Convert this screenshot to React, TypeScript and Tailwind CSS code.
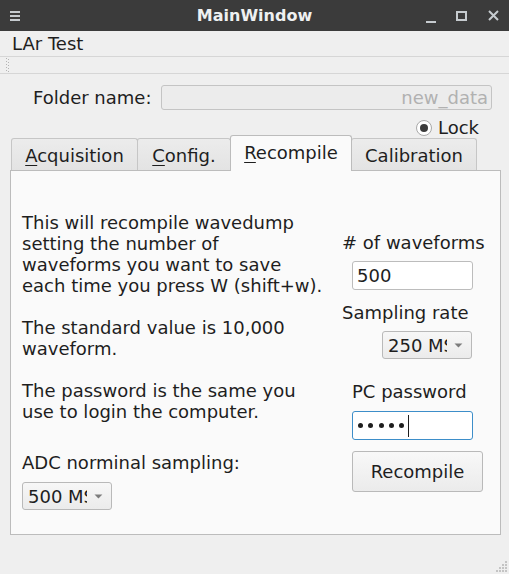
import React from 'react';

const font = { fontFamily: '"DejaVu Sans", "Liberation Sans", sans-serif' };

const Combo: React.FC<{ value: string }> = ({ value }) => (
  <div className="flex h-[28px] w-[90px] items-center rounded-[3px] border border-[#b9b9b9] bg-gradient-to-b from-[#f7f7f7] to-[#ebebeb] pl-[5px] pr-[8px]">
    <div className="w-[60px] overflow-hidden whitespace-nowrap text-[#1e1e1e]">{value}</div>
    <svg width="9" height="5" viewBox="0 0 9 5" className="ml-[7px]">
      <path d="M0.5 0.5 L8.5 0.5 L4.5 4.5 Z" fill="#7c7c7c" />
    </svg>
  </div>
);

const TabItem: React.FC<{ label: string; u?: boolean; width: string; active?: boolean }> = ({ label, u, width, active }) => {
  const first = label.charAt(0);
  const rest = label.slice(1);
  return (
    <div
      className={
        active
          ? `${width} -ml-px relative z-10 flex h-[36px] items-center justify-center rounded-t-[3px] border border-b-0 border-[#bcbcbc] bg-[#fafafa] pb-[2px] text-[#1e1e1e]`
          : `${width} -ml-px flex h-[33px] items-center justify-center rounded-t-[3px] border border-b-0 border-[#c6c6c6] bg-gradient-to-b from-[#ececec] to-[#e3e3e3] text-[#1e1e1e]`
      }
    >
      {u ? (
        <span>
          <span className="underline decoration-1 underline-offset-[3px]">{first}</span>
          {rest}
        </span>
      ) : (
        <span>{label}</span>
      )}
    </div>
  );
};

export default function App() {
  return (
    <div style={font} className="flex h-[574px] w-[509px] flex-col overflow-hidden bg-[#efefef] text-[18px] leading-[21px] text-[#1e1e1e]">
      {/* title bar */}
      <div className="grid h-[31px] shrink-0 grid-cols-[1fr_auto_1fr] items-center bg-[#3b3b3b]">
        <div className="flex pl-[10px]">
          <svg width="10" height="10" viewBox="0 0 10 10">
            <rect x="0" y="0" width="10" height="2" fill="#c6cbcf" />
            <rect x="0" y="4" width="10" height="2" fill="#c6cbcf" />
            <rect x="0" y="8" width="10" height="2" fill="#c6cbcf" />
          </svg>
        </div>
        <div className="text-[16px] font-bold text-[#eef0f1]">MainWindow</div>
        <div className="flex items-center justify-end">
          <svg width="11" height="11" viewBox="0 0 11 11" className="mr-[19px] mt-[6px]">
            <rect x="0" y="8" width="10" height="2" fill="#c6cbcf" />
          </svg>
          <svg width="11" height="10" viewBox="0 0 11 10" className="mr-[21px]">
            <rect x="1" y="1" width="9" height="8" fill="none" stroke="#c6cbcf" strokeWidth="2" />
          </svg>
          <svg width="11" height="11" viewBox="0 0 11 11" className="mr-[10px]">
            <path d="M1 1 L10 10 M10 1 L1 10" stroke="#c6cbcf" strokeWidth="2" />
          </svg>
        </div>
      </div>

      {/* menu bar */}
      <div className="flex h-[26px] shrink-0 items-center border-b border-[#d6d6d6] bg-[#efefef] pl-[12px]">
        <span>LAr Test</span>
      </div>

      {/* toolbar area */}
      <div className="flex h-[17px] shrink-0 border-b border-[#d6d6d6] pl-[6px] pt-[1px]">
        <svg width="3" height="14" viewBox="0 0 3 14">
          {[0, 3, 6, 9, 12].map((y) => (
            <g key={y}>
              <rect x="0" y={y} width="1" height="1" fill="#b4b4b4" />
              <rect x="2" y={y + 1} width="1" height="1" fill="#b4b4b4" />
            </g>
          ))}
        </svg>
      </div>

      {/* folder row */}
      <div className="flex h-[25px] shrink-0 items-center pl-[33px] mt-[11px]">
        <span className="w-[128px] whitespace-nowrap">Folder name:</span>
        <div className="flex h-[25px] w-[331px] items-center justify-end rounded-[3px] border border-[#c4c4c4] bg-[#ececec] pr-[3px] text-[#b1b1b1]">
          new_data
        </div>
      </div>

      {/* lock */}
      <div className="mt-[9px] flex h-[17px] shrink-0 items-center justify-end pr-[30px]">
        <div className="flex h-[16px] w-[16px] items-center justify-center rounded-full border border-[#a9a9a9] bg-white">
          <div className="h-[8px] w-[8px] rounded-full bg-[#3b3b3b]" />
        </div>
        <span className="ml-[6px]">Lock</span>
      </div>

      {/* tabs */}
      <div className="mt-[-1px] flex h-[36px] shrink-0 items-end pl-[12px]">
        <TabItem label="Acquisition" u width="w-[127px]" />
        <TabItem label="Config." u width="w-[94px]" />
        <TabItem label="Recompile" u width="w-[122px]" active />
        <TabItem label="Calibration" width="w-[126px]" />
      </div>

      {/* pane */}
      <div className="-mt-px ml-[10px] flex h-[365px] w-[491px] shrink-0 border border-[#bcbcbc] bg-[#fafafa]">
        <div className="flex w-[320px] flex-col pl-[11px] pt-[41px]">
          <p className="whitespace-nowrap">
            This will recompile wavedump
            <br />
            setting the number of
            <br />
            waveforms you want to save
            <br />
            each time you press W (shift+w).
          </p>
          <p className="mt-[21px]">
            The standard value is 10,000
            <br />
            waveform.
          </p>
          <p className="mt-[21px]">
            The password is the same you
            <br />
            use to login the computer.
          </p>
          <p className="mt-[30px]">ADC norminal sampling:</p>
          <div className="mt-[9px]">
            <Combo value="500 MS/s" />
          </div>
        </div>

        <div className="flex flex-col pl-[11px] pt-[61px]">
          <span className="whitespace-nowrap">
            # of waveforms
          </span>
          <div className="ml-[10px] mt-[8px] flex h-[29px] w-[121px] items-center rounded-[3px] border border-[#bcbcbc] bg-white pl-[4px]">
            500
          </div>
          <span className="mt-[12px] whitespace-nowrap">Sampling rate</span>
          <div className="ml-[40px] mt-[8px]">
            <Combo value="250 MS/s" />
          </div>
          <span className="ml-[10px] mt-[22px] whitespace-nowrap">PC password</span>
          <div className="ml-[10px] mt-[9px] flex h-[29px] w-[121px] items-center rounded-[3px] border border-[#3d8ec9] bg-white pl-[5px]">
            {[0, 1, 2, 3, 4].map((i) => (
              <span key={i} className="mr-[5.25px] h-[5px] w-[5px] rounded-full bg-[#1e1e1e]" />
            ))}
            <span className="ml-[-1px] h-[22px] w-px bg-[#1e1e1e]" />
          </div>
          <button className="ml-[10px] mt-[11px] flex h-[41px] w-[131px] items-center justify-center rounded-[3px] border border-[#b9b9b9] bg-gradient-to-b from-[#f8f8f8] to-[#ebebeb] text-[#1e1e1e]">
            Recompile
          </button>
        </div>
      </div>

      {/* size grip */}
      <div className="flex flex-1 items-end justify-end pb-[2px] pr-[2px]">
        <svg width="11" height="11" viewBox="0 0 11 11">
          {[
            [9, 0],
            [6, 3],
            [9, 3],
            [3, 6],
            [6, 6],
            [9, 6],
            [0, 9],
            [3, 9],
            [6, 9],
            [9, 9],
          ].map(([x, y], i) => (
            <rect key={i} x={x} y={y} width="2" height="2" fill="#c4c4c4" />
          ))}
        </svg>
      </div>
    </div>
  );
}
